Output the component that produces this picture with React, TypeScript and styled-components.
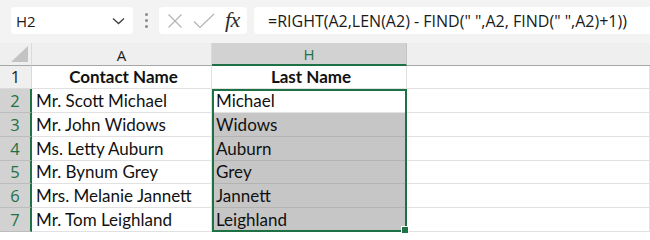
import React from 'react';
import styled, { createGlobalStyle } from 'styled-components';

const GlobalStyle = createGlobalStyle`
  body {
    margin: 0;
    background: #ffffff;
    overflow: hidden;
  }
`;

const GREEN = '#1e7145';
const UI_FONT = `'Open Sans', 'Noto Sans', sans-serif`;
const CELL_FONT = `Lato, 'Liberation Sans', sans-serif`;

const Sheet = styled.div`
  width: 650px;
  height: 235px;
  background: #ffffff;
  overflow: hidden;
`;

const FormulaBar = styled.div`
  height: 43px;
  background: #f3f3f3;
  display: flex;
  align-items: flex-start;
  padding: 7px 0 0 11px;
  box-sizing: border-box;
`;

const NameBox = styled.div`
  width: 122px;
  height: 27px;
  box-sizing: border-box;
  background: #ffffff;
  border-radius: 4px;
  display: flex;
  align-items: center;
  justify-content: space-between;
  padding: 0 8px 0 5px;
  font-family: ${UI_FONT};
  font-size: 15px;
  color: #1a1a1a;
`;

const Grip = styled.div`
  width: 26px;
  display: flex;
  justify-content: center;
  align-items: center;
  height: 27px;
`;

const Dots = styled.div`
  display: flex;
  flex-direction: column;
  gap: 3px;
  span {
    width: 3px;
    height: 3px;
    border-radius: 50%;
    background: #8a8a8a;
  }
`;

const FxBox = styled.div`
  width: 88px;
  height: 27px;
  box-sizing: border-box;
  background: #ffffff;
  border-radius: 4px;
  display: flex;
  align-items: center;
  padding: 0 4px 0 8px;
  gap: 10px;
`;

const FxLabel = styled.span`
  font-family: 'Liberation Serif', 'DejaVu Serif', serif;
  font-style: italic;
  font-size: 22px;
  color: #2b2b2b;
  letter-spacing: -0.5px;
  margin-top: -2px;
`;

const FormulaInput = styled.div`
  flex: 1;
  height: 27px;
  margin-left: 7px;
  background: #ffffff;
  border-radius: 4px 0 0 4px;
  display: flex;
  align-items: center;
  padding-left: 14px;
  font-family: ${UI_FONT};
  font-size: 16px;
  color: #1a1a1a;
  white-space: pre;
`;

const GridWrap = styled.div`
  position: relative;
`;

const Grid = styled.div`
  display: grid;
  grid-template-columns: 32px 180px 195px 1fr;
  grid-template-rows: 23px 23.3px repeat(6, 23.75px);
`;

const Corner = styled.div`
  background: #efefef;
  border-right: 1px solid #dadada;
  border-bottom: 1px solid #a6a6a6;
  box-sizing: border-box;
  display: flex;
  align-items: flex-end;
  justify-content: flex-end;
  padding: 0 3px 3px 0;
`;

const ColHeader = styled.div<{ $active?: boolean }>`
  background: ${({ $active }) => ($active ? '#d2d2d2' : '#efefef')};
  color: ${({ $active }) => ($active ? GREEN : '#1a1a1a')};
  border-right: 1px solid ${({ $active }) => ($active ? '#c4c4c4' : '#dadada')};
  border-bottom: ${({ $active }) => ($active ? `2px solid ${GREEN}` : '1px solid #a6a6a6')};
  box-sizing: border-box;
  font-family: ${UI_FONT};
  font-size: 15px;
  display: flex;
  align-items: center;
  justify-content: center;
  padding-top: 1px;
`;

const HeaderFiller = styled.div`
  background: #efefef;
  border-bottom: 1px solid #a6a6a6;
  box-sizing: border-box;
`;

const RowHeader = styled.div<{ $active?: boolean }>`
  background: ${({ $active }) => ($active ? '#d2d2d2' : '#efefef')};
  color: ${({ $active }) => ($active ? GREEN : '#1a1a1a')};
  border-right: ${({ $active }) => ($active ? `2px solid ${GREEN}` : '1px solid #dadada')};
  border-bottom: 1px solid ${({ $active }) => ($active ? '#bdbdbd' : '#dadada')};
  box-sizing: border-box;
  font-family: ${UI_FONT};
  font-size: 16.5px;
  display: flex;
  align-items: flex-end;
  justify-content: center;
  padding-bottom: 0;
`;

const Cell = styled.div<{ $bold?: boolean; $filled?: boolean }>`
  background: ${({ $filled }) => ($filled ? '#c6c6c6' : '#ffffff')};
  border-right: 1px solid #e1e1e1;
  border-bottom: 1px solid ${({ $filled }) => ($filled ? '#b3b3b3' : '#e1e1e1')};
  box-sizing: border-box;
  font-family: ${CELL_FONT};
  font-size: 17px;
  font-weight: ${({ $bold }) => ($bold ? 700 : 400)};
  color: #111111;
  display: flex;
  align-items: flex-end;
  justify-content: ${({ $bold }) => ($bold ? 'center' : 'flex-start')};
  padding: 0 0 1px 4px;
  white-space: nowrap;
  overflow: hidden;
`;

const Selection = styled.div`
  position: absolute;
  left: 212px;
  top: 46px;
  width: 195px;
  height: 143px;
  border: 2px solid ${GREEN};
  box-sizing: border-box;
  pointer-events: none;
`;

const FillHandle = styled.div`
  position: absolute;
  right: -4px;
  bottom: -4px;
  width: 6px;
  height: 6px;
  background: ${GREEN};
  border: 1px solid #ffffff;
`;

const rows = [
  ['Mr. Scott Michael', 'Michael'],
  ['Mr. John Widows', 'Widows'],
  ['Ms. Letty Auburn', 'Auburn'],
  ['Mr. Bynum Grey', 'Grey'],
  ['Mrs. Melanie Jannett', 'Jannett'],
  ['Mr. Tom Leighland', 'Leighland'],
];

const App: React.FC = () => {
  return (
    <Sheet>
      <GlobalStyle />
      <FormulaBar>
        <NameBox>
          <span>H2</span>
          <svg width="13" height="8" viewBox="0 0 13 8">
            <path d="M1 1.5 L6.5 6.5 L12 1.5" fill="none" stroke="#404040" strokeWidth="1.3" />
          </svg>
        </NameBox>
        <Grip>
          <Dots>
            <span />
            <span />
            <span />
          </Dots>
        </Grip>
        <FxBox>
          <svg width="16" height="16" viewBox="0 0 16 16">
            <path d="M1.5 1.5 L14.5 14.5 M14.5 1.5 L1.5 14.5" stroke="#b4b4b4" strokeWidth="1.2" fill="none" />
          </svg>
          <svg width="22" height="16" viewBox="0 0 22 16">
            <path d="M1 8.5 L7 14.5 L21 1" stroke="#b4b4b4" strokeWidth="1.2" fill="none" />
          </svg>
          <FxLabel>fx</FxLabel>
        </FxBox>
        <FormulaInput>=RIGHT(A2,LEN(A2) - FIND(" ",A2, FIND(" ",A2)+1))</FormulaInput>
      </FormulaBar>

      <GridWrap>
        <Grid>
          <Corner>
            <svg width="17" height="16" viewBox="0 0 17 16">
              <path d="M17 0 L17 16 L0 16 Z" fill="#c3c3c3" />
            </svg>
          </Corner>
          <ColHeader>A</ColHeader>
          <ColHeader $active>H</ColHeader>
          <HeaderFiller />

          <RowHeader>1</RowHeader>
          <Cell $bold>Contact Name</Cell>
          <Cell $bold>Last Name</Cell>
          <Cell />

          {rows.map(([full, last], i) => (
            <React.Fragment key={full}>
              <RowHeader $active>{i + 2}</RowHeader>
              <Cell>{full}</Cell>
              <Cell $filled={i > 0}>{last}</Cell>
              <Cell />
            </React.Fragment>
          ))}
        </Grid>
        <Selection>
          <FillHandle />
        </Selection>
      </GridWrap>
    </Sheet>
  );
};

export default App;
